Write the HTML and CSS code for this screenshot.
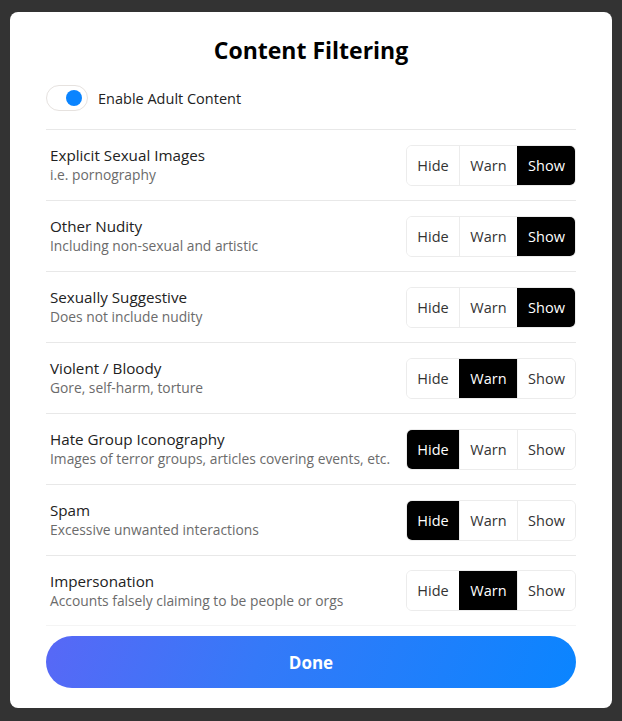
FILE: index.html
```html
<!DOCTYPE html>
<html lang="en">
<head>
    <meta charset="UTF-8">
    <meta name="viewport" content="width=device-width, initial-scale=1.0">
    <title>Content Filtering</title>
    <link rel="stylesheet" href="styles.css">
</head>
<body>
    <div class="modal">
        <h1 class="modal-title">Content Filtering</h1>

        <label class="adult-toggle">
            <span class="switch"><span class="knob"></span></span>
            Enable Adult Content
        </label>

        <div class="filter-list">
            <div class="filter-row">
                <div class="filter-info">
                    <div class="filter-name">Explicit Sexual Images</div>
                    <div class="filter-desc">i.e. pornography</div>
                </div>
                <div class="segmented">
                    <button class="seg seg-hide">Hide</button>
                    <button class="seg seg-warn">Warn</button>
                    <button class="seg seg-show active">Show</button>
                </div>
            </div>

            <div class="filter-row">
                <div class="filter-info">
                    <div class="filter-name">Other Nudity</div>
                    <div class="filter-desc">Including non-sexual and artistic</div>
                </div>
                <div class="segmented">
                    <button class="seg seg-hide">Hide</button>
                    <button class="seg seg-warn">Warn</button>
                    <button class="seg seg-show active">Show</button>
                </div>
            </div>

            <div class="filter-row">
                <div class="filter-info">
                    <div class="filter-name">Sexually Suggestive</div>
                    <div class="filter-desc">Does not include nudity</div>
                </div>
                <div class="segmented">
                    <button class="seg seg-hide">Hide</button>
                    <button class="seg seg-warn">Warn</button>
                    <button class="seg seg-show active">Show</button>
                </div>
            </div>

            <div class="filter-row">
                <div class="filter-info">
                    <div class="filter-name">Violent / Bloody</div>
                    <div class="filter-desc">Gore, self-harm, torture</div>
                </div>
                <div class="segmented">
                    <button class="seg seg-hide">Hide</button>
                    <button class="seg seg-warn active">Warn</button>
                    <button class="seg seg-show">Show</button>
                </div>
            </div>

            <div class="filter-row">
                <div class="filter-info">
                    <div class="filter-name">Hate Group Iconography</div>
                    <div class="filter-desc">Images of terror groups, articles covering events, etc.</div>
                </div>
                <div class="segmented">
                    <button class="seg seg-hide active">Hide</button>
                    <button class="seg seg-warn">Warn</button>
                    <button class="seg seg-show">Show</button>
                </div>
            </div>

            <div class="filter-row">
                <div class="filter-info">
                    <div class="filter-name">Spam</div>
                    <div class="filter-desc">Excessive unwanted interactions</div>
                </div>
                <div class="segmented">
                    <button class="seg seg-hide active">Hide</button>
                    <button class="seg seg-warn">Warn</button>
                    <button class="seg seg-show">Show</button>
                </div>
            </div>

            <div class="filter-row">
                <div class="filter-info">
                    <div class="filter-name">Impersonation</div>
                    <div class="filter-desc">Accounts falsely claiming to be people or orgs</div>
                </div>
                <div class="segmented">
                    <button class="seg seg-hide">Hide</button>
                    <button class="seg seg-warn active">Warn</button>
                    <button class="seg seg-show">Show</button>
                </div>
            </div>
        </div>

        <button class="done-button">Done</button>
    </div>
</body>
</html>
```

FILE: styles.css
```css
* {
    margin: 0;
    padding: 0;
    box-sizing: border-box;
    font-family: 'Open Sans', 'Noto Sans', sans-serif;
}

body {
    background-color: #333333;
    padding: 12px 10px 13px;
}

.modal {
    background: white;
    border-radius: 8px;
    padding: 22px 36px 20px;
    height: 696px;
}

.modal-title {
    text-align: center;
    font-size: 23px;
    font-weight: 700;
    line-height: 32px;
    color: #000;
}

.adult-toggle {
    display: flex;
    align-items: center;
    gap: 10px;
    margin-top: 19px;
    margin-bottom: 18px;
    font-size: 14.5px;
    font-weight: 500;
    color: #222;
}

.switch {
    width: 42px;
    height: 26px;
    border: 1px solid #e6e2df;
    border-radius: 13px;
    display: flex;
    align-items: center;
    justify-content: flex-end;
    padding-right: 5px;
}

.knob {
    width: 16px;
    height: 16px;
    border-radius: 50%;
    background-color: #0a84ff;
}

.filter-row {
    display: flex;
    align-items: center;
    justify-content: space-between;
    height: 71px;
    border-top: 1px solid #e8e8e8;
    padding-left: 4px;
}

.filter-row:last-child {
    border-bottom: 1px solid #f4f4f4;
}

.filter-name {
    font-size: 15.2px;
    line-height: 20px;
    font-weight: 500;
    color: #222;
}

.filter-desc {
    font-size: 13.8px;
    line-height: 20px;
    color: #6b6b6b;
}

.segmented {
    display: flex;
    height: 41px;
    border: 1px solid #ececec;
    border-radius: 6px;
    overflow: hidden;
}

.seg {
    border: none;
    background: white;
    font-size: 14.5px;
    color: #333;
    cursor: pointer;
}

.seg-hide {
    width: 52px;
}

.seg-warn {
    width: 58px;
    border-left: 1px solid #ececec;
}

.seg-show {
    width: 58px;
    border-left: 1px solid #ececec;
}

.seg.active {
    background: black;
    color: white;
    font-weight: 500;
    border-color: black;
}

.done-button {
    display: block;
    width: 100%;
    height: 52px;
    margin-top: 10px;
    border: none;
    border-radius: 26px;
    background: linear-gradient(110deg, #5868f6, #3579f8 40%, #0a85ff);
    color: white;
    font-size: 17px;
    font-weight: 700;
    cursor: pointer;
}
```
